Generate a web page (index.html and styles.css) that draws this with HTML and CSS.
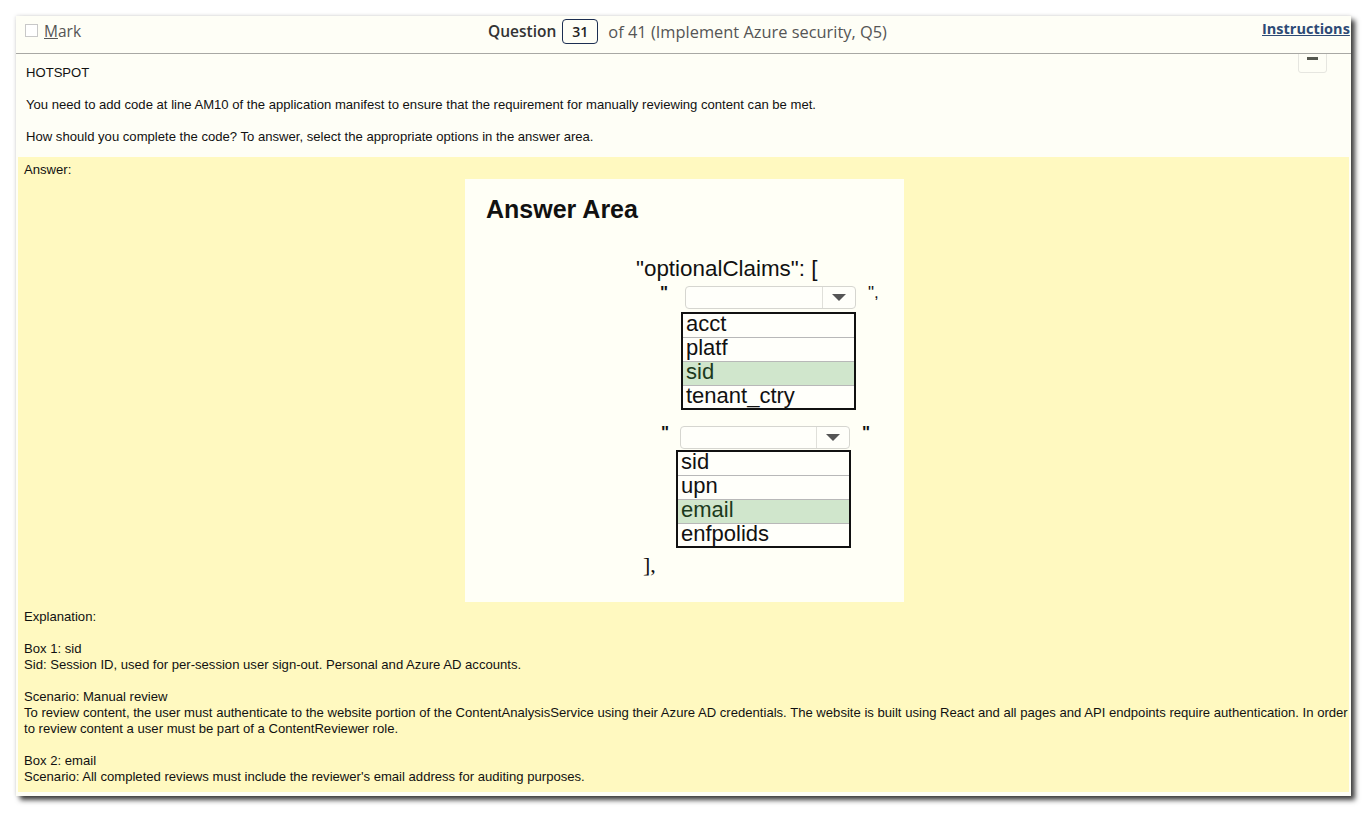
FILE: index.html
```html
<!DOCTYPE html>
<html>
<head>
<meta charset="utf-8">
<link rel="stylesheet" href="styles.css">
</head>
<body>
<div class="window">
  <div class="header">
    <div class="mark"><span class="checkbox"></span><span class="mark-label"><u>M</u>ark</span></div>
    <div class="qtitle"><b>Question</b><span class="qnum">31</span><span class="qof">of 41 (Implement Azure security, Q5)</span></div>
    <a class="instructions">Instructions</a>
  </div>
  <div class="minbtn"><span></span></div>
  <div class="content">
    <div class="question">
      <p>HOTSPOT</p>
      <p>You need to add code at line AM10 of the application manifest to ensure that the requirement for manually reviewing content can be met.</p>
      <p>How should you complete the code? To answer, select the appropriate options in the answer area.</p>
    </div>
    <div class="answer">
      <div class="answer-label">Answer:</div>
      <div class="area-wrap">
        <div class="area">
          <div class="area-title">Answer Area</div>
          <div class="code">
            <div class="line1">"optionalClaims": [</div>
            <div class="ddrow r1">
              <span class="q">"</span>
              <span class="dd"><span class="dd-arrow"></span></span>
              <span class="q q2">",</span>
            </div>
            <div class="list l1">
              <div class="item">acct</div>
              <div class="item">platf</div>
              <div class="item sel">sid</div>
              <div class="item">tenant_ctry</div>
            </div>
            <div class="ddrow r2">
              <span class="q">"</span>
              <span class="dd"><span class="dd-arrow"></span></span>
              <span class="q q2">"</span>
            </div>
            <div class="list l2">
              <div class="item">sid</div>
              <div class="item">upn</div>
              <div class="item sel">email</div>
              <div class="item">enfpolids</div>
            </div>
            <div class="close">],</div>
          </div>
        </div>
      </div>
      <div class="explain">
        <p>Explanation:</p>
        <p>Box 1: sid<br>Sid: Session ID, used for per-session user sign-out. Personal and Azure AD accounts.</p>
        <p>Scenario: Manual review<br>To review content, the user must authenticate to the website portion of the ContentAnalysisService using their Azure AD credentials. The website is built using React and all pages and API endpoints require authentication. In order to review content a user must be part of a ContentReviewer role.</p>
        <p>Box 2: email<br>Scenario: All completed reviews must include the reviewer's email address for auditing purposes.</p>
      </div>
    </div>
  </div>
</div>
</body>
</html>
```

FILE: styles.css
```css
html, body {
  margin: 0;
  padding: 0;
  background: #ffffff;
}
body {
  width: 1368px;
  height: 813px;
  overflow: hidden;
}
.window {
  position: relative;
  margin: 16px 0 0 16px;
  width: 1335px;
  height: 780px;
  background: #fefef6;
  box-shadow: 4px 4px 5px rgba(0, 0, 0, 0.75), 0 0 4px rgba(0, 0, 0, 0.15);
  overflow: hidden;
  font-family: "Liberation Sans", Arial, sans-serif;
}
.header {
  height: 38px;
  box-sizing: border-box;
  padding-bottom: 8px;
  border-bottom: 1px solid #a8a8a4;
  display: flex;
  align-items: center;
  font-family: "Open Sans", "Segoe UI", sans-serif;
  font-size: 15.5px;
  color: #333;
  position: relative;
  z-index: 2;
  background: #fefef6;
}
.mark {
  display: flex;
  align-items: center;
  padding-left: 9px;
  width: 200px;
}
.checkbox {
  width: 11px;
  height: 11px;
  border: 1px solid #c8c8c8;
  background: #fff;
  margin-right: 6px;
}
.mark-label {
  color: #555;
}
.qtitle {
  position: absolute;
  left: 472px;
  top: 0;
  height: 30px;
  display: flex;
  align-items: center;
  color: #444;
}
.qtitle b {
  font-weight: 600;
  color: #333;
}
.qnum {
  display: inline-block;
  width: 36px;
  height: 25px;
  box-sizing: border-box;
  border: 1px solid #1c2e52;
  border-radius: 4px;
  text-align: center;
  line-height: 23px;
  font-size: 14px;
  font-weight: 600;
  color: #222;
  margin: 0 10px 0 6px;
}
.qof {
  color: #555;
  font-size: 16.4px;
}
.instructions {
  position: absolute;
  left: 1246px;
  top: 3px;
  font-size: 14.5px;
  font-weight: 700;
  color: #2d4a75;
  text-decoration: underline;
  white-space: nowrap;
}
.minbtn {
  position: absolute;
  left: 1282px;
  top: 30px;
  width: 29px;
  height: 27px;
  border: 1px solid #e6e6e0;
  border-radius: 3px;
  background: #fefef6;
  display: flex;
  justify-content: center;
  padding-top: 10px;
  box-sizing: border-box;
}
.minbtn span {
  width: 11px;
  height: 3px;
  background: #55584f;
}
.content {
  padding: 0 2px;
}
.question {
  padding: 12px 0 13px 8px;
  font-size: 13.1px;
  color: #111;
}
.question p {
  margin: 0 0 18px 0;
  line-height: 14px;
}
.question p:last-child {
  margin-bottom: 0;
}
.answer {
  background: #fff9c0;
  padding: 5px 0 4px 6px;
  font-size: 13.1px;
  color: #111;
  height: 635px;
  box-sizing: border-box;
}
.answer-label {
  line-height: 16px;
}
.area-wrap {
  padding-left: 441px;
  margin-top: 1px;
}
.area {
  width: 439px;
  height: 423px;
  background: #fffff6;
  position: relative;
  font-family: "Liberation Sans", Arial, sans-serif;
  color: #111;
}
.area-title {
  position: absolute;
  left: 21px;
  top: 16px;
  font-size: 25px;
  font-weight: 700;
}
.code {
  position: absolute;
  left: 171px;
  top: 77px;
  font-size: 22.4px;
}
.line1 {
  line-height: 26px;
}
.ddrow {
  position: relative;
  height: 24px;
}
.ddrow .q {
  position: absolute;
  top: 0;
  font-size: 17px;
  font-weight: 700;
  line-height: 22px;
}
.r1 .q { left: 24px; }
.r1 .q2 { left: 232px; font-weight: 400; }
.r1 .dd { left: 49px; width: 171px; }
.r2 .q { left: 25px; }
.r2 .q2 { left: 226px; }
.r2 .dd { left: 44px; width: 170px; }
.dd {
  position: absolute;
  top: 4px;
  height: 23px;
  box-sizing: border-box;
  border: 1px solid #d6d6d0;
  border-radius: 4px;
  background: #fffffa;
}
.dd-arrow {
  position: absolute;
  right: 0;
  top: 0;
  width: 32px;
  height: 21px;
  border-left: 1px solid #e0e0da;
}
.dd-arrow::after {
  content: "";
  position: absolute;
  left: 9px;
  top: 7px;
  border-left: 7px solid transparent;
  border-right: 7px solid transparent;
  border-top: 7px solid #555;
}
.list {
  position: relative;
  width: 175px;
  box-sizing: border-box;
  border: 2px solid #111;
  background: #fffffa;
}
.l1 { margin-left: 45px; margin-top: 6px; }
.l2 { margin-left: 40px; margin-top: 4px; }
.r2 { margin-top: 12px; }
.item {
  height: 24px;
  box-sizing: border-box;
  border-bottom: 1px solid #b8b8b8;
  padding-left: 3px;
  line-height: 20px;
  font-size: 22px;
}
.item:last-child {
  border-bottom: 0;
  height: 22px;
}
.item.sel {
  background: #d0e6cc;
  color: #1c3a1c;
}
.close {
  margin-left: 7px;
  margin-top: 4px;
  font-family: "Liberation Serif", "Times New Roman", serif;
  font-size: 22px;
}
.explain {
  margin-top: 7px;
}
.explain p {
  margin: 0 0 16px 0;
  line-height: 16px;
}
```
